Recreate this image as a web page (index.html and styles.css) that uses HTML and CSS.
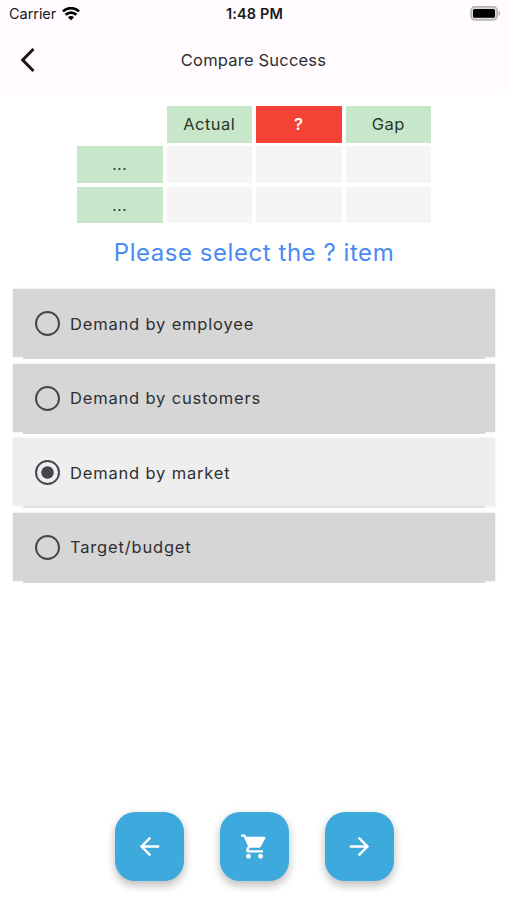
FILE: index.html
```html
<!DOCTYPE html>
<html lang="en">
<head>
    <meta charset="UTF-8">
    <meta name="viewport" content="width=device-width, initial-scale=1.0">
    <title>Compare Success</title>
    <link rel="stylesheet" href="styles.css">
</head>
<body>
    <header>
        <div class="status-bar">
            <div class="carrier">
                <span>Carrier</span>
                <svg width="18" height="14" viewBox="0 0 18 14" fill="none" stroke="#000" stroke-width="2.6">
                    <path d="M.9 4.4C5.4 0 12.6 0 17.1 4.4"/>
                    <path d="M3.6 7.8C6.6 4.9 11.4 4.9 14.4 7.8"/>
                    <path d="M5.9 10.2C7.6 8.6 10.4 8.6 12.1 10.2L9 13.3Z" fill="#000" stroke="none"/>
                </svg>
            </div>
            <div class="time">1:48 PM</div>
            <svg class="battery" width="31" height="15" viewBox="0 0 31 15">
                <rect x="1" y=".8" width="26.2" height="13.1" rx="3.8" fill="#dddadd" stroke="#b3b0b3" stroke-width="1.5"/>
                <rect x="3" y="2.9" width="22" height="8.9" rx="1.5" fill="#000"/>
                <path d="M28.6 5V9.8C30.8 8.8 30.8 6 28.6 5Z" fill="#aaa8aa"/>
            </svg>
        </div>
        <div class="app-bar">
            <svg class="back" width="16" height="26" viewBox="0 0 16 26" fill="none" stroke="#161618" stroke-width="3">
                <path d="M13.5 2L2.7 13L13.5 24"/>
            </svg>
            <h1>Compare Success</h1>
        </div>
    </header>

    <main>
        <div class="grid">
            <div></div>
            <div class="cell label">Actual</div>
            <div class="cell target">?</div>
            <div class="cell label">Gap</div>
            <div class="cell label dots">...</div>
            <div class="cell"></div>
            <div class="cell"></div>
            <div class="cell"></div>
            <div class="cell label dots">...</div>
            <div class="cell"></div>
            <div class="cell"></div>
            <div class="cell"></div>
        </div>

        <h2>Please select the ? item</h2>

        <div class="options">
            <label class="option">
                <input type="radio" name="item">
                <span>Demand by employee</span>
            </label>
            <label class="option">
                <input type="radio" name="item">
                <span>Demand by customers</span>
            </label>
            <label class="option selected">
                <input type="radio" name="item" checked>
                <span>Demand by market</span>
            </label>
            <label class="option">
                <input type="radio" name="item">
                <span>Target/budget</span>
            </label>
        </div>
    </main>

    <footer>
        <button aria-label="Previous">
            <svg width="29" height="29" viewBox="0 0 24 24" fill="#fff">
                <path d="M20 11H7.83l5.59-5.59L12 4l-8 8 8 8 1.41-1.41L7.83 13H20v-2z"/>
            </svg>
        </button>
        <button aria-label="Cart">
            <svg width="29" height="29" viewBox="0 0 24 24" fill="#fff">
                <path d="M7 18c-1.1 0-1.99.9-1.99 2S5.9 22 7 22s2-.9 2-2-.9-2-2-2zM1 2v2h2l3.6 7.59-1.35 2.45c-.16.28-.25.61-.25.96 0 1.1.9 2 2 2h12v-2H7.42c-.14 0-.25-.11-.25-.25l.03-.12.9-1.63h7.45c.75 0 1.41-.41 1.75-1.03l3.58-6.49c.08-.14.12-.31.12-.48 0-.55-.45-1-1-1H5.21l-.94-2H1zm16 16c-1.1 0-1.99.9-1.99 2s.89 2 1.99 2 2-.9 2-2-.9-2-2-2z"/>
            </svg>
        </button>
        <button aria-label="Next">
            <svg width="29" height="29" viewBox="0 0 24 24" fill="#fff">
                <path d="M12 4l-1.41 1.41L16.17 11H4v2h12.17l-5.58 5.59L12 20l8-8z"/>
            </svg>
        </button>
    </footer>
</body>
</html>
```
FILE: styles.css
```css
* {
    box-sizing: border-box;
}
body {
    display: flex;
    flex-direction: column;
    height: 900px;
    margin: 0;
    background: #fff;
    color: #2f2f31;
    font-family: Inter, sans-serif;
    font-size: 17px;
}
header {
    height: 94px;
    background: #fffbff;
}
.status-bar {
    display: grid;
    grid-template-columns: 1fr auto 1fr;
    align-items: center;
    height: 27px;
    padding: 0 7px 0 9px;
    color: #19191b;
    font-size: 14.5px;
}
.carrier {
    display: flex;
    align-items: center;
    gap: 6px;
    letter-spacing: -0.05px;
}
.time {
    font-weight: 600;
    letter-spacing: 0.15px;
}
.battery {
    justify-self: end;
    margin-right: -1px;
}
.app-bar {
    display: grid;
    grid-template-columns: 40px 1fr 40px;
    align-items: center;
    height: 66px;
    padding: 0 20px;
}
h1 {
    margin: 0;
    font-size: 16.5px;
    font-weight: 400;
    letter-spacing: 0.2px;
    text-align: center;
}
main {
    flex: 1;
    padding: 12px 12px 0 13px;
}
.grid {
    display: grid;
    grid-template-columns: repeat(4, 85.5px);
    grid-template-rows: repeat(3, 36.6px);
    gap: 3.8px 4px;
    justify-content: center;
}
.cell {
    display: flex;
    align-items: center;
    justify-content: center;
    background: #f5f5f5;
    font-size: 16.5px;
    letter-spacing: 0.5px;
}
.label {
    background: #c8e6c9;
    color: #2b372c;
}
.dots {
    font-size: 15px;
    letter-spacing: 0.7px;
}
.target {
    background: #f44336;
    color: #fff;
    font-weight: 600;
}
h2 {
    margin: 14px 0 21px;
    color: #4a8af4;
    font-size: 24px;
    font-weight: 400;
    line-height: 31px;
    letter-spacing: 0.55px;
    text-align: center;
}
.options {
    display: flex;
    flex-direction: column;
    gap: 6.5px;
}
.option {
    display: flex;
    align-items: center;
    gap: 10px;
    height: 68px;
    padding: 1px 0 0 22px;
    background: #d6d6d6;
    box-shadow: 0 12px 0 -10px #d6d6d6, 0 0 2px rgba(0, 0, 0, 0.12);
    font-size: 16.5px;
    letter-spacing: 0.82px;
}
.selected {
    background: #eee;
    box-shadow: 0 12px 0 -10px #e0e0e0, 0 0 2px #e4e4e4;
}
input {
    appearance: none;
    width: 25px;
    height: 25px;
    margin: 0;
    border: 2.5px solid #49454f;
    border-radius: 50%;
}
input:checked {
    background: radial-gradient(circle, #49454f 5.8px, transparent 6.6px);
}
footer {
    display: flex;
    justify-content: center;
    gap: 36px;
    padding: 0 0 19px 1px;
}
button {
    display: flex;
    align-items: center;
    justify-content: center;
    width: 69px;
    height: 69px;
    padding: 0;
    border: none;
    border-radius: 20px;
    background: #3ea9dc;
    box-shadow: 0 5px 8px rgba(0, 0, 0, 0.2), 0 2px 12px rgba(0, 0, 0, 0.08);
}
```
